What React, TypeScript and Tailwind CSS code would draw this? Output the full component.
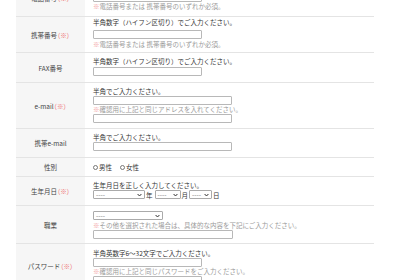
import React from 'react';

const Req = () => <span className="text-[#ee7575] [font-feature-settings:'palt']">（※）</span>;

const Row = ({ label, req, cls, pad, children }: { label: string; req?: boolean; cls: string; pad: string; children: React.ReactNode }) => (
  <div className={`flex border-b border-[#e4e4e4] ${cls}`}>
    <div className="flex w-[69px] shrink-0 items-center justify-center bg-[#f6f6f6] text-[#444]">
      {label}
      {req && <Req />}
    </div>
    <div className={`flex-1 pl-[8px] ${pad}`}>{children}</div>
  </div>
);

const Field = ({ w, cls = '' }: { w: string; cls?: string }) => (
  <input type="text" className={`block h-[9px] rounded-[1px] border border-[#b8b8b8] bg-white p-0 ${w} ${cls}`} />
);

const Note = ({ text, cls = '' }: { text: string; cls?: string }) => (
  <p className={`text-[#9a9a9a] ${cls}`}>
    <span className="text-[#f29a9a]">※</span>
    {text}
  </p>
);

const Chevron = () => (
  <svg width="5" height="4" viewBox="0 0 5 4" className="shrink-0">
    <path d="M0.6 1 L2.5 3 L4.4 1" fill="none" stroke="#333" strokeWidth="1" />
  </svg>
);

const Select = ({ w }: { w: string }) => (
  <div className={`flex h-[9px] items-center justify-between rounded-[1px] border border-[#aaa] bg-white px-[2px] text-[#777] ${w}`}>
    <span className="leading-none">----</span>
    <Chevron />
  </div>
);

const Radio = ({ label }: { label: string }) => (
  <label className="flex items-center">
    <span className="mr-[1px] inline-block h-[5px] w-[5px] rounded-full border border-[#777] bg-white" />
    {label}
  </label>
);

export default function App() {
  return (
    <div className="h-[280px] w-[400px] overflow-hidden bg-white font-['Noto_Sans_CJK_JP',sans-serif] text-[6.5px] leading-[8px] text-[#333]">
      <div className="ml-[16px] mt-[-21px] w-[358px]">
        {/* 電話番号 (上が切れている) */}
        <Row label="電話番号" req cls="h-[38px]" pad="pt-[2px]">
          <p>半角数字（ハイフン区切り）でご入力ください。</p>
          <Field w="w-[109px]" cls="mt-[4px]" />
          <Note text="電話番号または 携帯番号のいずれか必須。" />
        </Row>

        <Row label="携帯番号" req cls="h-[36px]" pad="pt-[1px]">
          <p>半角数字（ハイフン区切り）でご入力ください。</p>
          <Field w="w-[109px]" cls="mt-[4px]" />
          <Note text="電話番号または 携帯番号のいずれか必須。" cls="mt-[1px]" />
        </Row>

        <Row label="FAX番号" cls="h-[30px]" pad="pt-[4px]">
          <p>半角数字（ハイフン区切り）でご入力ください。</p>
          <Field w="w-[109px]" cls="mt-[2px]" />
        </Row>

        <Row label="e-mail" req cls="h-[46px]" pad="pt-[4px]">
          <p>半角でご入力ください。</p>
          <Field w="w-[139px]" cls="mt-[1px]" />
          <Note text="確認用に上記と同じアドレスを入れてください。" />
          <Field w="w-[139px]" cls="mt-[1px]" />
        </Row>

        <Row label="携帯e-mail" cls="h-[29px]" pad="pt-[4px]">
          <p>半角でご入力ください。</p>
          <Field w="w-[139px]" cls="mt-[1px]" />
        </Row>

        <Row label="性別" cls="h-[19px]" pad="pt-[5px]">
          <div className="flex gap-[8px]">
            <Radio label="男性" />
            <Radio label="女性" />
          </div>
        </Row>

        <Row label="生年月日" req cls="h-[29px]" pad="pt-[4px]">
          <p>生年月日を正しく入力してください。</p>
          <div className="mt-[1px] flex items-center">
            <Select w="w-[52px]" />
            <span className="ml-[1px] mr-[2px]">年</span>
            <Select w="w-[26px]" />
            <span className="ml-[1px] mr-[1px]">月</span>
            <Select w="w-[23px]" />
            <span className="ml-[1px]">日</span>
          </div>
        </Row>

        <Row label="職業" cls="h-[38px]" pad="pt-[5px]">
          <Select w="w-[70px]" />
          <Note text="その他を選択された場合は、具体的な内容を下記にご入力ください。" cls="mt-[1px]" />
          <Field w="w-[140px]" cls="mt-[1px]" />
        </Row>

        <Row label="パスワード" req cls="h-[45px]" pad="pt-[5px]">
          <p>半角英数字6～32文字でご入力ください。</p>
          <Field w="w-[109px]" cls="mt-[1px]" />
          <Note text="確認用に上記と同じパスワードをご入力ください。" />
          <Field w="w-[109px]" cls="mt-[1px]" />
        </Row>
      </div>
    </div>
  );
}
